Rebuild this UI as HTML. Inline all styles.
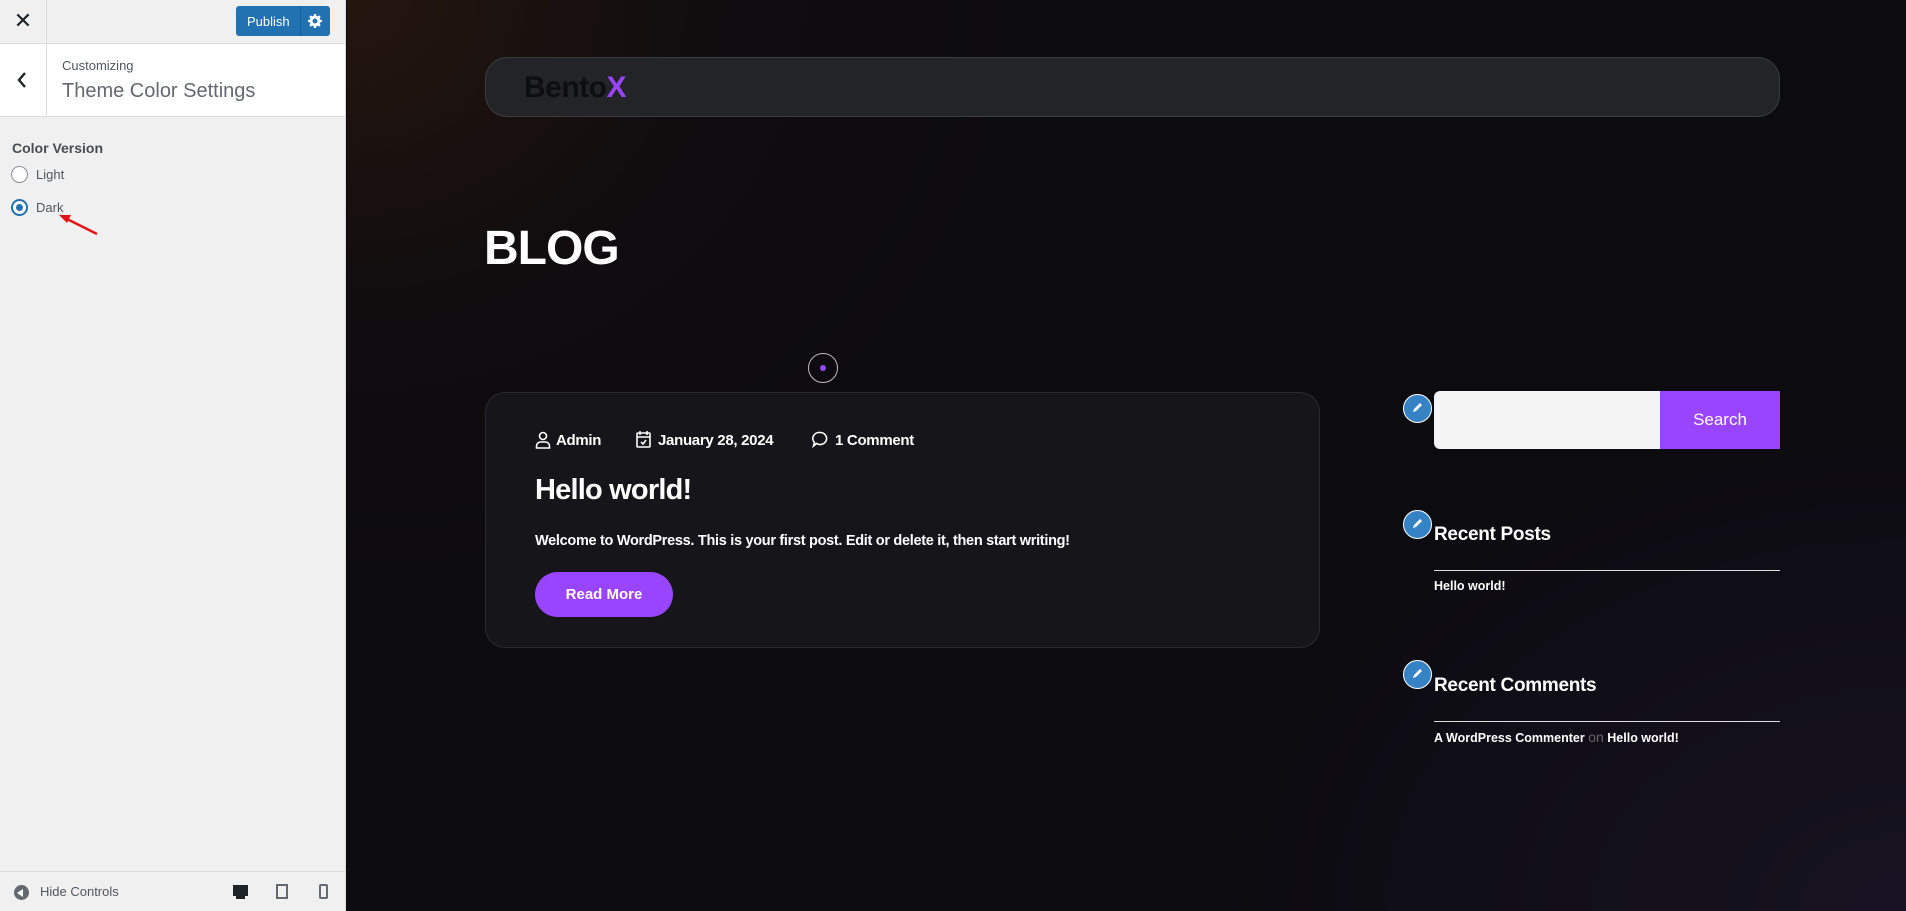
<!DOCTYPE html>
<html><head><meta charset="utf-8">
<style>
*{box-sizing:border-box;margin:0;padding:0}
body{width:1906px;height:911px;overflow:hidden;font-family:"Liberation Sans",sans-serif;position:relative;background:#0b0a10}
#side{position:absolute;left:0;top:0;width:346px;height:911px;background:#f0f0f1;border-right:1px solid #dcdcde;color:#50575e}
#top{height:44px;border-bottom:1px solid #dcdcde;position:relative}
#close{position:absolute;left:0;top:0;width:47px;height:43px;border-right:1px solid #dcdcde;font-size:22px;color:#1d2327;text-align:center;line-height:42px}
#pub{position:absolute;left:236px;top:6px;width:94px;height:30px;background:#2271b1;border-radius:3px;color:#fff;font-size:13px}
#pub span{position:absolute;left:11px;top:8px}
#pub i{position:absolute;left:64px;top:0;width:1px;height:30px;background:#135e96}
#hdr{height:73px;background:#fff;border-bottom:1px solid #dcdcde;position:relative}
#back{position:absolute;left:0;top:0;width:47px;height:72px;border-right:1px solid #dcdcde}
.a{position:absolute;left:62px;top:14px;font-size:13px;color:#50575e}
.b{position:absolute;left:62px;top:36px;font-size:20px;color:#646970;font-weight:300}
#cv{position:absolute;left:12px;top:140px;font-size:14px;font-weight:bold;color:#1d2327;opacity:.8}
.r{position:absolute;left:11px;width:17px;height:17px;border:1px solid #8c8f94;border-radius:50%;background:#fff}
.rl{position:absolute;left:36px;font-size:13px;color:#50575e}
#bot{position:absolute;left:0;top:871px;width:346px;height:40px;border-top:1px solid #dcdcde}
#prev{position:absolute;left:347px;top:0;width:1559px;height:911px;background:radial-gradient(ellipse 700px 600px at 0% 0%,#25160f 0%,rgba(20,14,14,.6) 50%,rgba(11,10,16,0) 100%),radial-gradient(ellipse 700px 500px at 100% 100%,#171322,rgba(11,10,16,0)),#0c0b10}
.abs{position:absolute}
.w{color:#fff;font-weight:bold}
.m{letter-spacing:-.3px}
.pen{position:absolute;width:29px;height:29px;border-radius:50%;background:#3582c4;border:1.5px solid #fff}
</style></head><body>
<div id="side">
 <div id="top"><div id="close">✕</div>
  <div id="pub"><span>Publish</span><i></i>
   <svg class="abs" style="left:72px;top:8px" width="14" height="14" viewBox="0 0 20 20"><path fill="#fff" d="M8.5 0h3l.5 2.6 1.8.8 2.2-1.5 2.1 2.1-1.5 2.2.8 1.8 2.6.5v3l-2.6.5-.8 1.8 1.5 2.2-2.1 2.1-2.2-1.5-1.8.8-.5 2.6h-3L8 17.4l-1.8-.8-2.2 1.5-2.1-2.1 1.5-2.2-.8-1.8L0 11.5v-3L2.6 8l.8-1.8-1.5-2.2L4 1.9l2.2 1.5L8 2.6zM10 6.5a3.5 3.5 0 100 7 3.5 3.5 0 000-7z"/></svg>
  </div></div>
 <div id="hdr"><div id="back"><svg class="abs" style="left:16px;top:28px" width="12" height="16" viewBox="0 0 12 16"><path d="M9 1L3 8l6 7" stroke="#1d2327" stroke-width="2.4" fill="none"/></svg></div>
  <div class="a">Customizing</div><div class="b">Theme Color Settings</div></div>
 <div id="cv">Color Version</div>
 <div class="r" style="top:166px"></div><div class="rl" style="top:167px">Light</div>
 <div class="r" style="top:199px;border-color:#2271b1;border-width:2px"><div style="position:absolute;left:3px;top:3px;width:7px;height:7px;border-radius:50%;background:#2271b1"></div></div><div class="rl" style="top:200px">Dark</div>
 <svg class="abs" style="left:55px;top:210px" width="50" height="30"><path d="M42 24L10 8" stroke="#e5141a" stroke-width="2.5"/><path d="M4 5l12 0-4 8z" fill="#e5141a"/></svg>
 <div id="bot">
  <div class="abs" style="left:14px;top:13px;width:15px;height:15px;border-radius:50%;background:#646970"><div style="position:absolute;left:3px;top:3.5px;border-right:6px solid #fff;border-top:4px solid transparent;border-bottom:4px solid transparent"></div></div>
  <div class="abs" style="left:40px;top:12px;font-size:13px;color:#50575e">Hide Controls</div>
  <div class="abs" style="left:233px;top:13px;width:15px;height:11px;background:#1d2327"></div><div class="abs" style="left:236px;top:24px;width:9px;height:3px;background:#1d2327"></div>
  <div class="abs" style="left:276px;top:12px;width:12px;height:15px;border:2px solid #646970"></div>
  <div class="abs" style="left:319px;top:12px;width:9px;height:15px;border:2px solid #646970;border-radius:2px"></div>
 </div>
</div>
<div id="prev">
 <div class="abs" style="left:138px;top:57px;width:1295px;height:60px;border-radius:22px;background:#232427;border:1px solid #3b3c40"></div>
 <div class="abs" style="left:177px;top:71px;font-size:30px;font-weight:bold;color:#0e0d12;letter-spacing:-.5px">Bento<span style="color:#9945ff">X</span></div>
 <div class="abs w" style="left:137px;top:221px;font-size:48px;letter-spacing:-1px">BLOG</div>
 <div class="abs" style="left:461px;top:353px;width:30px;height:30px;border-radius:50%;border:1px solid #bbb"><div style="position:absolute;left:11px;top:11px;width:6px;height:6px;border-radius:50%;background:#9945ff"></div></div>
 <div class="abs" style="left:138px;top:392px;width:835px;height:256px;border-radius:20px;background:#161519;border:1px solid #2a292e"></div>
 <svg class="abs" style="left:188px;top:431px" width="16" height="18" viewBox="0 0 16 18" fill="none" stroke="#fff" stroke-width="1.6"><circle cx="8" cy="5" r="3.5"/><path d="M1.5 17v-2a4 4 0 014-4h5a4 4 0 014 4v2z"/></svg>
 <div class="abs w m" style="left:209px;top:432px;font-size:15px">Admin</div>
 <svg class="abs" style="left:289px;top:430px" width="15" height="18" viewBox="0 0 15 18" fill="none" stroke="#fff" stroke-width="1.6"><rect x="1" y="3" width="13" height="14" rx="1"/><path d="M4 1v4M11 1v4M1 7h13M5 12l2 2 3-4"/></svg>
 <div class="abs w m" style="left:311px;top:432px;font-size:15px">January 28, 2024</div>
 <svg class="abs" style="left:465px;top:431px" width="16" height="17" viewBox="0 0 16 17" fill="none" stroke="#fff" stroke-width="1.6"><path d="M8 1.5a6.5 6 0 11-3.5 11L1.5 15l1-3.5A6.5 6 0 018 1.5z"/></svg>
 <div class="abs w m" style="left:488px;top:432px;font-size:15px">1 Comment</div>
 <div class="abs w" style="left:188px;top:474px;font-size:29px;letter-spacing:-.8px">Hello world!</div>
 <div class="abs w m" style="left:188px;top:533px;font-size:14.5px">Welcome to WordPress. This is your first post. Edit or delete it, then start writing!</div>
 <div class="abs w" style="left:188px;top:572px;width:138px;height:45px;border-radius:23px;background:#9945ff;font-size:15px;text-align:center;line-height:45px">Read More</div>
 <div class="abs" style="left:1087px;top:391px;width:227px;height:58px;border-radius:6px 0 0 6px;background:#f4f4f4"></div>
 <div class="abs" style="left:1313px;top:391px;width:120px;height:58px;background:#9945ff;color:#fff;font-size:17px;text-align:center;line-height:58px">Search</div>
 <div class="abs w" style="left:1087px;top:524px;font-size:19px;letter-spacing:-.3px">Recent Posts</div>
 <div class="abs" style="left:1087px;top:570px;width:346px;height:1px;background:#ddd"></div>
 <div class="abs w" style="left:1087px;top:579px;font-size:12.5px">Hello world!</div>
 <div class="abs w" style="left:1087px;top:675px;font-size:19px;letter-spacing:-.3px">Recent Comments</div>
 <div class="abs" style="left:1087px;top:721px;width:346px;height:1px;background:#ddd"></div>
 <div class="abs w" style="left:1087px;top:729px;font-size:12.5px">A WordPress Commenter <span style="color:#666;font-weight:normal;font-size:14px">on</span> Hello world!</div>
 <div class="pen" style="left:1056px;top:394px"></div>
 <div class="pen" style="left:1056px;top:510px"></div>
 <div class="pen" style="left:1056px;top:660px"></div>
</div>
<svg class="abs" style="left:1410px;top:401px" width="14" height="14" viewBox="0 0 14 14"><path d="M3 11l1-3 6-6 2 2-6 6z" fill="#fff"/></svg>
<svg class="abs" style="left:1410px;top:517px" width="14" height="14" viewBox="0 0 14 14"><path d="M3 11l1-3 6-6 2 2-6 6z" fill="#fff"/></svg>
<svg class="abs" style="left:1410px;top:667px" width="14" height="14" viewBox="0 0 14 14"><path d="M3 11l1-3 6-6 2 2-6 6z" fill="#fff"/></svg>
</body></html>
